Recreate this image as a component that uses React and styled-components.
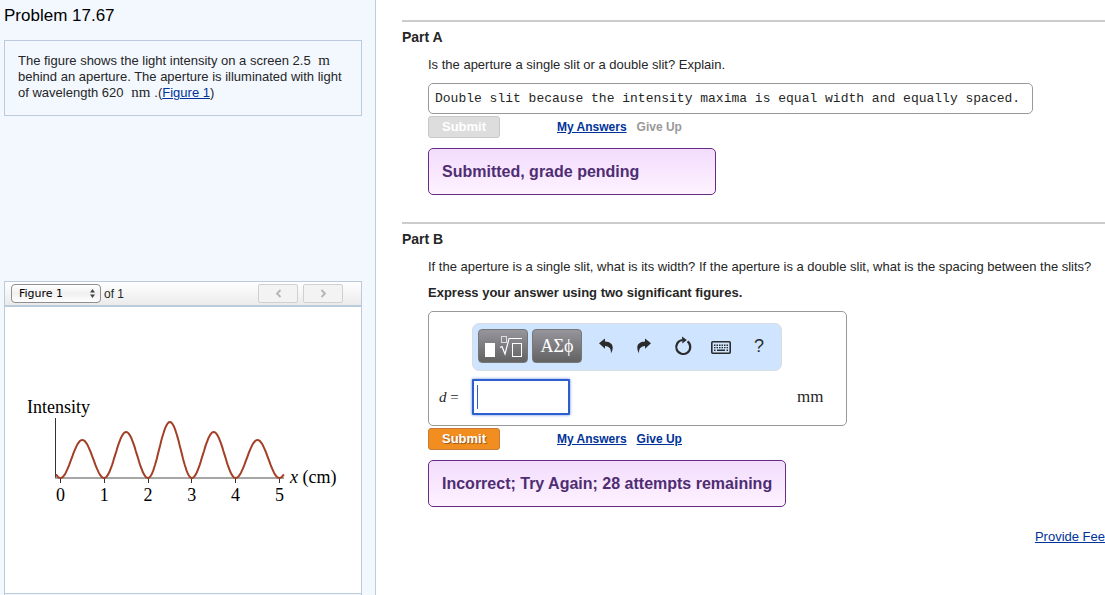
import { useState } from "react";
import styled, { createGlobalStyle, css } from "styled-components";

const GlobalStyle = createGlobalStyle`
    *{
        box-sizing:border-box;
    }
    body{
        margin:0;
        background:#fff;
        color:#262626;
        font:13px/16px "Liberation Sans",Arial,sans-serif;
    }
`
const Page = styled.div`
    display:grid;
    grid-template-columns:376px minmax(0,1fr);
    min-height:100vh;
    @media(max-width:770px){
        grid-template-columns:minmax(0,1fr);
    }
`
const Sidebar = styled.aside`
    display:flex;
    flex-direction:column;
    padding:6px 13px 0 4px;
    background:#f3f8ff;
    border-right:1px solid #b9cbdc;
`
const Title = styled.h1`
    margin:0 0 14px;
    color:#000;
    font-size:17px;
    font-weight:400;
    line-height:20px;
`
const Intro = styled.p`
    margin:0 0 165px;
    padding:12px 13px 14px;
    border:1px solid #b9cbdc;
`
const Unit = styled.span`
    margin:0 ${({ $large }) => $large ? 15 : 4}px;
    font-family:"Liberation Serif","Times New Roman",serif;
    font-size:${({ $large }) => $large ? 17 : 15}px;
    line-height:12px;
`
const Link = styled.a`
    color:#003399;
    text-decoration:underline;
`
const Figure = styled.section`
    background:#fff;
    border:1px solid #b9cbdc;
`
const FigureBar = styled.div`
    display:flex;
    align-items:center;
    gap:3px;
    height:25px;
    padding:0 18px 0 6px;
    background:linear-gradient(#fff,#ebebeb);
    border-bottom:2px solid #b9cbdc;
    font-size:12px;
`
const SelectWrap = styled.span`
    position:relative;
    display:flex;
    svg{
        position:absolute;
        right:6px;
        top:5px;
        pointer-events:none;
    }
`
const Select = styled.select`
    appearance:none;
    width:90px;
    height:19px;
    padding:0 7px;
    border:1px solid #8f8f8f;
    border-radius:4px;
    background:linear-gradient(#fff,#f0f0f0 50%,#fff);
    color:#000;
    font:11px "DejaVu Sans",sans-serif;
`
const Pager = styled.div`
    display:flex;
    gap:5px;
    margin-left:auto;
`
const PagerButton = styled.button`
    display:flex;
    align-items:center;
    justify-content:center;
    width:40px;
    height:19px;
    padding:0;
    border:1px solid #d0d0d0;
    border-radius:2px;
    background:#f3f3f3;
`
const FigureBody = styled.div`
    padding:83px 15px;
    svg{
        display:block;
        max-width:100%;
    }
`
const SidebarEnd = styled.div`
    flex:1;
    border:solid #b9cbdc;
    border-width:0 1px;
    background:#f3f8ff;
`
const Main = styled.main`
    padding:20px 0 0 26px;
`
const Part = styled.section`
    margin-bottom:27px;
    padding-top:7px;
    border-top:2px solid #ccc;
    &:last-of-type{
        margin-bottom:22px;
    }
`
const PartTitle = styled.h2`
    margin:0 0 12px;
    font-size:14px;
    line-height:16px;
`
const PartBody = styled.div`
    padding-left:26px;
`
const Question = styled.label`
    display:block;
    margin:0 0 10px;
    font-weight:${({ $bold }) => $bold ? 700 : 400};
`
const Essay = styled.input`
    display:block;
    width:605px;
    max-width:100%;
    height:31px;
    padding:0 6px;
    border:1px solid #999;
    border-radius:5px;
    color:#262626;
    font:13px "Liberation Mono","Courier New",monospace;
`
const Actions = styled.div`
    display:flex;
    align-items:center;
    gap:10px;
    margin:2px 0 10px;
    font-size:12px;
    font-weight:700;
`
const Submit = styled.button`
    width:72px;
    height:22px;
    margin-right:47px;
    padding:0 0 2px;
    border:1px solid #c77a35;
    border-radius:3px;
    background:#f18e1f;
    color:#fff;
    font:700 13px "Liberation Sans",Arial,sans-serif;
    text-shadow:1px 1px 1px #8a5a20;
    ${({ disabled }) => disabled && css`
        border-color:#c8c8c8;
        background:#ddd;
        text-shadow:none;
    `}
`
const Disabled = styled.span`
    color:#999;
`
const Feedback = styled.div`
    width:fit-content;
    min-width:288px;
    padding:12px 13px;
    border:1px solid #662d85;
    border-radius:5px;
    background:linear-gradient(#f2dcfd,#fef2ff);
    color:#4f2d72;
    font-size:16px;
    font-weight:700;
    line-height:21px;
`
const AnswerBox = styled.div`
    display:grid;
    grid-template-columns:33px 310px 1fr;
    row-gap:8px;
    align-items:center;
    width:419px;
    max-width:100%;
    padding:11px 10px 10px;
    border:1px solid #999;
    border-radius:5px;
`
const Toolbar = styled.div`
    grid-column:2;
    display:flex;
    align-items:center;
    gap:4px;
    height:48px;
    padding:0 5px 2px;
    border:1px solid #d8dde3;
    border-radius:7px;
    background:#cfe5ff;
`
const PaletteButton = styled.button`
    display:flex;
    align-items:center;
    justify-content:center;
    width:50px;
    height:34px;
    padding:0;
    border:1px solid #777;
    border-radius:4px;
    background:linear-gradient(#96959c,#626262);
    color:#fff;
    font:18px "Liberation Serif","DejaVu Serif",serif;
`
const Tools = styled.div`
    display:flex;
    flex:1;
    justify-content:space-between;
    padding:0 6px 0 9px;
`
const ToolButton = styled.button`
    display:flex;
    align-items:center;
    justify-content:center;
    width:22px;
    height:24px;
    padding:0;
    border:0;
    background:none;
    color:#2b2b2b;
    font:18px "Liberation Sans",Arial,sans-serif;
`
const Variable = styled.label`
    grid-column:1;
    font:15px "Liberation Serif",serif;
`
const MathInput = styled.input`
    width:98px;
    height:36px;
    padding:0 4px;
    border:2px solid #2c5fcd;
    border-radius:1px;
    box-shadow:0 0 3px #5c86e0;
    outline:none;
    font:18px "Liberation Serif",serif;
`
const MathField = styled.div`
    position:relative;
    display:flex;
`
const Caret = styled.span`
    position:absolute;
    left:5px;
    top:6px;
    width:1px;
    height:24px;
    background:#2c5fcd;
`
const Footer = styled.footer`
    display:flex;
    justify-content:flex-end;
`

// intensity pattern: one maximum per cm
const peaks = [38, 46, 56, 46, 38]
const originX = 60.4
const cm = 43.8
const baseY = 478

const curve = () => {
    const points = []
    for (let x = -0.1; x <= 5.11; x += 0.02) {
        const lobe = Math.min(4, Math.max(0, Math.floor(x)))
        const y = baseY - peaks[lobe] * Math.sin(Math.PI * x) ** 2
        points.push(`${(originX + x * cm).toFixed(1)},${y.toFixed(1)}`)
    }
    return points.join(" ")
}

function IntensityChart() {
    return (
        <svg width="325" height="120" viewBox="20 390 325 120" role="img" fontFamily="Liberation Serif, serif" fontSize="18" fill="#000">
            <text x="27" y="413">Intensity</text>
            <path d="M55.5 418V478" stroke="#333" />
            <path d="M55 478H284" stroke="#888" strokeWidth="1.5" />
            {[0, 1, 2, 3, 4, 5].map(n => (
                <g key={n}>
                    <path d={`M${Math.floor(originX + n * cm) + 0.5} 478V483`} stroke="#333" />
                    <text x={originX + n * cm} y="501" textAnchor="middle">{n}</text>
                </g>
            ))}
            <polyline points={curve()} fill="none" stroke="#a23f26" strokeWidth="2" />
            <text x="290" y="483"><tspan fontStyle="italic">x</tspan> (cm)</text>
        </svg>
    )
}

const UndoArrow = ({ flip }) => (
    <svg width="14" height="16" viewBox="0 0 14 16" fill="currentColor">
        <path transform={flip ? "translate(14 0) scale(-1 1)" : undefined} d="M0 5.3 6 .6V3.5C11.5 3.7 13.7 6.3 13.7 9.6 13.7 11.9 13 13.7 11.9 15.4 12.2 11.3 10.8 8.3 6 8V10.8Z" />
    </svg>
)

const ResetIcon = () => (
    <svg width="18" height="20" viewBox="0 0 18 20">
        <path d="M13.5 5.4A7 7 0 1 1 8.5 4" fill="none" stroke="currentColor" strokeWidth="2.2" />
        <path d="M8 .4 12.8 4 8.4 7.4Z" fill="currentColor" />
    </svg>
)

const KeyboardIcon = () => (
    <svg width="20" height="18" viewBox="0 -4 20 18" fill="none" stroke="currentColor">
        <rect x=".8" y=".8" width="18.4" height="11.4" rx="1" strokeWidth="1.6" />
        <path d="M3 4.2H17M3 6.6H17" strokeWidth="1.4" strokeDasharray="1.5 1" />
        <path d="M3 9.3H4.5M6 9.3H14M15.5 9.3H17" strokeWidth="1.4" />
    </svg>
)

const TemplateIcon = () => (
    <svg width="40" height="26" viewBox="0 0 40 26" fill="none" stroke="#fff">
        <rect x="2" y="10" width="10" height="14" fill="#fff" stroke="none" />
        <rect x="18.5" y="3.5" width="5" height="6" stroke="#ddd" />
        <path d="M17 14.5 19 13.5 22 21 26 5.5H39" strokeWidth="1.2" />
        <rect x="29.5" y="10.5" width="9" height="13" />
    </svg>
)

const Chevron = ({ d }) => (
    <svg width="7" height="9" viewBox="0 0 7 9" fill="none" stroke="#b5b5b5" strokeWidth="1.8">
        <path d={d} />
    </svg>
)

function App() {
    const [answer, answerSet] = useState("")

    return (
        <Page>
            <GlobalStyle />
            <Sidebar>
                <Title>Problem 17.67</Title>
                <Intro>
                    The figure shows the light intensity on a screen 2.5 <Unit>m</Unit> behind an aperture. The aperture is illuminated with light of wavelength 620 <Unit>nm</Unit>.(<Link href="#figure">Figure 1</Link>)
                </Intro>
                <Figure id="figure">
                    <FigureBar>
                        <SelectWrap>
                            <Select aria-label="Figure">
                                <option>Figure 1</option>
                            </Select>
                            <svg width="5" height="9" viewBox="0 0 5 9" fill="#444">
                                <path d="M0 3.5 2.5 0 5 3.5ZM0 5.5H5L2.5 9Z" />
                            </svg>
                        </SelectWrap>
                        <span>of 1</span>
                        <Pager>
                            <PagerButton aria-label="Previous" disabled><Chevron d="M5.5 1 2 4.5 5.5 8" /></PagerButton>
                            <PagerButton aria-label="Next" disabled><Chevron d="M1.5 1 5 4.5 1.5 8" /></PagerButton>
                        </Pager>
                    </FigureBar>
                    <FigureBody>
                        <IntensityChart />
                    </FigureBody>
                </Figure>
                <SidebarEnd />
            </Sidebar>
            <Main>
                <Part>
                    <PartTitle>Part A</PartTitle>
                    <PartBody>
                        <Question htmlFor="essay">Is the aperture a single slit or a double slit? Explain.</Question>
                        <Essay id="essay" readOnly value="Double slit because the intensity maxima is equal width and equally spaced." />
                        <Actions>
                            <Submit disabled>Submit</Submit>
                            <Link href="#answers">My Answers</Link>
                            <Disabled>Give Up</Disabled>
                        </Actions>
                        <Feedback>Submitted, grade pending</Feedback>
                    </PartBody>
                </Part>
                <Part>
                    <PartTitle>Part B</PartTitle>
                    <PartBody>
                        <Question as="p">If the aperture is a single slit, what is its width? If the aperture is a double slit, what is the spacing between the slits?</Question>
                        <Question as="p" $bold>Express your answer using two significant figures.</Question>
                        <AnswerBox>
                            <Toolbar>
                                <PaletteButton aria-label="Templates"><TemplateIcon /></PaletteButton>
                                <PaletteButton>ΑΣϕ</PaletteButton>
                                <Tools>
                                    <ToolButton aria-label="Undo"><UndoArrow /></ToolButton>
                                    <ToolButton aria-label="Redo"><UndoArrow flip /></ToolButton>
                                    <ToolButton aria-label="Reset"><ResetIcon /></ToolButton>
                                    <ToolButton aria-label="Keyboard"><KeyboardIcon /></ToolButton>
                                    <ToolButton>?</ToolButton>
                                </Tools>
                            </Toolbar>
                            <Variable htmlFor="distance"><i>d</i> =</Variable>
                            <MathField>
                                <MathInput id="distance" value={answer} onChange={e => answerSet(e.target.value)} />
                                {!answer && <Caret />}
                            </MathField>
                            <Unit $large>mm</Unit>
                        </AnswerBox>
                        <Actions>
                            <Submit>Submit</Submit>
                            <Link href="#answers">My Answers</Link>
                            <Link href="#give-up">Give Up</Link>
                        </Actions>
                        <Feedback>Incorrect; Try Again; 28 attempts remaining</Feedback>
                    </PartBody>
                </Part>
                <Footer>
                    <Link href="#feedback">Provide Fee</Link>
                </Footer>
            </Main>
        </Page>
    )
}
export default App;
